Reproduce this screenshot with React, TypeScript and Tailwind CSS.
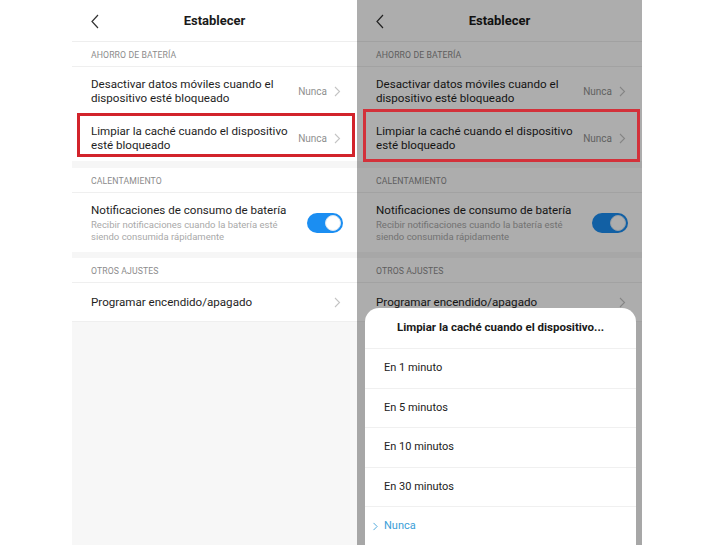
import React from "react";

const FONT = { fontFamily: "Roboto, 'Noto Sans', 'Liberation Sans', sans-serif" };

function Chevron({ className = "" }: { className?: string }) {
  return (
    <svg width="7" height="11" viewBox="0 0 7 11" className={className}>
      <path d="M1 1 L5.5 5.5 L1 10" fill="none" stroke="currentColor" strokeWidth="1.1" />
    </svg>
  );
}

function SectionLabel({ children }: { children: React.ReactNode }) {
  return (
    <div className="flex h-[25px] items-center border-b border-[#efefef] pl-[19px] pt-[3px] text-[8.7px] tracking-[0.1px] text-[#8c8c8c]">
      {children}
    </div>
  );
}

function NavRow({ children, value }: { children: React.ReactNode; value?: string }) {
  return (
    <div className="flex h-[47px] items-center justify-between pl-[19px] pr-[16px] pt-[1px]">
      <div className="text-[11.6px] leading-[14.5px] text-[#1e1e1e]">{children}</div>
      <div className="flex items-center gap-[7px]">
        {value && <span className="text-[10px] text-[#8f8f8f]">{value}</span>}
        <Chevron className="text-[#c4c4c4]" />
      </div>
    </div>
  );
}

function Phone({ dim = false }: { dim?: boolean }) {
  return (
    <div className="relative flex h-full w-[285px] shrink-0 flex-col bg-white" style={FONT}>
      <div className="relative flex h-[42px] items-center justify-center border-b border-[#eeeeee] pt-[1px]">
        <svg width="8" height="15" viewBox="0 0 8 15" className="absolute left-[19px] top-[14px] text-[#333]">
          <path d="M7 1 L1 7.5 L7 14" fill="none" stroke="currentColor" strokeWidth="1.2" />
        </svg>
        <span className="text-[13px] font-bold text-[#1a1a1a]">Establecer</span>
      </div>

      <SectionLabel>AHORRO DE BATERÍA</SectionLabel>
      <NavRow value="Nunca">
        Desactivar datos móviles cuando el
        <br />
        dispositivo esté bloqueado
      </NavRow>
      <NavRow value="Nunca">
        Limpiar la caché cuando el dispositivo
        <br />
        esté bloqueado
      </NavRow>

      <div className="h-[7px] bg-[#f6f6f6]" />
      <SectionLabel>CALENTAMIENTO</SectionLabel>
      <div className="flex h-[59px] items-center justify-between pl-[19px] pr-[14px]">
        <div>
          <div className="text-[11.6px] leading-[15px] text-[#1e1e1e]">
            Notificaciones de consumo de batería
          </div>
          <div className="mt-[1px] text-[9.5px] leading-[12px] text-[#a9a9a9]">
            Recibir notificaciones cuando la batería esté
            <br />
            siendo consumida rápidamente
          </div>
        </div>
        <div className="flex h-[20px] w-[36px] items-center justify-end rounded-full bg-[#1b8ef2] pr-[2px]">
          <div className="h-[16px] w-[16px] rounded-full border border-[#d7e6f3] bg-white" />
        </div>
      </div>

      <div className="h-[6px] bg-[#f6f6f6]" />
      <SectionLabel>OTROS AJUSTES</SectionLabel>
      <div className="flex h-[38px] items-center justify-between pl-[19px] pr-[16px] pt-[1px]">
        <span className="text-[11.6px] text-[#1e1e1e]">Programar encendido/apagado</span>
        <Chevron className="text-[#c4c4c4]" />
      </div>
      <div className="flex-1 border-t border-[#efefef] bg-[#f7f7f7]" />

      {dim && <div className="absolute inset-0 bg-black/[0.32]" />}

      {dim && (
        <div className="absolute bottom-0 left-[8px] right-[6px] top-[308px] rounded-t-[14px] bg-white">
          <div className="flex h-[40px] items-center justify-center text-[11.5px] font-bold text-[#1a1a1a]">
            Limpiar la caché cuando el dispositivo...
          </div>
          {["En 1 minuto", "En 5 minutos", "En 10 minutos", "En 30 minutos"].map((t) => (
            <div
              key={t}
              className="flex h-[39.5px] items-center border-t border-[#f0f0f0] pl-[19px] text-[11px] text-[#222]"
            >
              {t}
            </div>
          ))}
          <div className="flex h-[39.5px] items-center border-t border-[#f0f0f0] pl-[7px] text-[11px] text-[#3a9ed8]">
            <Chevron className="mr-[5px] scale-[0.8]" />
            Nunca
          </div>
        </div>
      )}
    </div>
  );
}

export default function App() {
  return (
    <div className="relative flex h-[545px] w-[725px] overflow-hidden bg-white">
      <div className="w-[72px] shrink-0" />
      <Phone />
      <Phone dim />
      {/* highlight annotations */}
      <div className="pointer-events-none absolute left-[77px] top-[113px] h-[44px] w-[278px] border-[3px] border-[#d2232b]" />
      <div className="pointer-events-none absolute left-[363px] top-[109px] h-[53px] w-[277px] border-[3px] border-[#d3313a]" />
    </div>
  );
}
